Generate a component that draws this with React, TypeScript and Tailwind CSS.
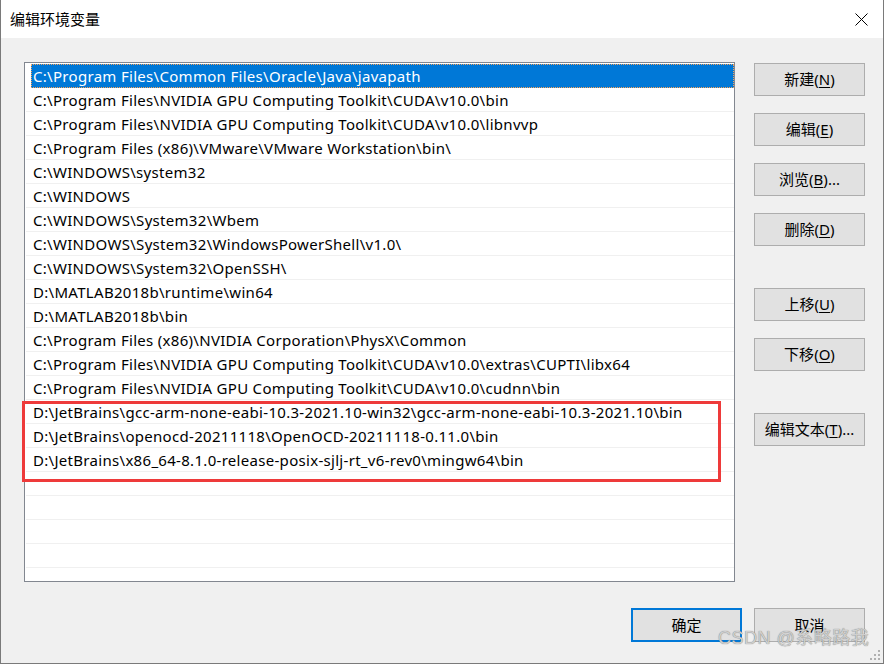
import React from 'react';

const PATHS = [
  'C:\\Program Files\\Common Files\\Oracle\\Java\\javapath',
  'C:\\Program Files\\NVIDIA GPU Computing Toolkit\\CUDA\\v10.0\\bin',
  'C:\\Program Files\\NVIDIA GPU Computing Toolkit\\CUDA\\v10.0\\libnvvp',
  'C:\\Program Files (x86)\\VMware\\VMware Workstation\\bin\\',
  'C:\\WINDOWS\\system32',
  'C:\\WINDOWS',
  'C:\\WINDOWS\\System32\\Wbem',
  'C:\\WINDOWS\\System32\\WindowsPowerShell\\v1.0\\',
  'C:\\WINDOWS\\System32\\OpenSSH\\',
  'D:\\MATLAB2018b\\runtime\\win64',
  'D:\\MATLAB2018b\\bin',
  'C:\\Program Files (x86)\\NVIDIA Corporation\\PhysX\\Common',
  'C:\\Program Files\\NVIDIA GPU Computing Toolkit\\CUDA\\v10.0\\extras\\CUPTI\\libx64',
  'C:\\Program Files\\NVIDIA GPU Computing Toolkit\\CUDA\\v10.0\\cudnn\\bin',
  'D:\\JetBrains\\gcc-arm-none-eabi-10.3-2021.10-win32\\gcc-arm-none-eabi-10.3-2021.10\\bin',
  'D:\\JetBrains\\openocd-20211118\\OpenOCD-20211118-0.11.0\\bin',
  'D:\\JetBrains\\x86_64-8.1.0-release-posix-sjlj-rt_v6-rev0\\mingw64\\bin',
];

const FONT = "font-['Noto_Sans','Noto_Sans_CJK_SC',sans-serif]";

function Btn({ label, k, tail = '' }: { label: string; k?: string; tail?: string }) {
  return (
    <button className="w-[111px] h-[33px] bg-[#e1e1e1] border border-[#adadad] text-[15px] text-black flex items-center justify-center leading-none">
      {label}
      {k && (
        <>
          (<span className="underline underline-offset-2">{k}</span>){tail}
        </>
      )}
    </button>
  );
}

export default function App() {
  const empty = 5;
  return (
    <div className={`w-[884px] h-[664px] flex flex-col bg-[#f0f0f0] border-l border-r border-b border-[#7a7a7a] relative overflow-hidden ${FONT}`}>
      {/* title bar */}
      <div className="h-[38px] bg-white flex items-center justify-between pl-[9px] pr-[15px] shrink-0">
        <span className="text-[15px] text-black">编辑环境变量</span>
        <svg width="13" height="13" viewBox="0 0 13 13" className="mt-[1px]">
          <path d="M0.5 0.5 L12.5 12.5 M12.5 0.5 L0.5 12.5" stroke="#000" strokeWidth="1" />
        </svg>
      </div>

      <div className="flex-1 flex flex-col">
        <div className="flex pt-[24px] pl-[23px] gap-[19px]">
          {/* list */}
          <div className="w-[711px] h-[520px] border border-[#828790] bg-white overflow-hidden pt-[1px] pl-[1px] tracking-[0.3px]">
            {PATHS.map((p, i) => (
              <div
                key={i}
                className={
                  i === 0
                    ? 'h-[24px] ml-[5px] bg-[#0078d7] text-white outline-1 outline-dotted outline-[#f7a35a] -outline-offset-1 flex items-center pl-[2px] pt-[1px] text-[15px] whitespace-nowrap'
                    : 'h-[24px] border-b border-[#f0f0f0] flex items-center pl-[7px] pt-[1px] text-[15px] text-black whitespace-nowrap'
                }
              >
                {p}
              </div>
            ))}
            {Array.from({ length: empty }).map((_, i) => (
              <div key={'e' + i} className="h-[24px] border-b border-[#f0f0f0]" />
            ))}
          </div>

          {/* side buttons */}
          <div className="flex flex-col pt-[1px]">
            <div className="flex flex-col gap-[17px]">
              <Btn label="新建" k="N" />
              <Btn label="编辑" k="E" />
              <Btn label="浏览" k="B" tail="..." />
              <Btn label="删除" k="D" />
            </div>
            <div className="flex flex-col gap-[17px] mt-[42px]">
              <Btn label="上移" k="U" />
              <Btn label="下移" k="O" />
            </div>
            <div className="mt-[42px]">
              <Btn label="编辑文本" k="T" tail="..." />
            </div>
          </div>
        </div>

        {/* bottom buttons */}
        <div className="flex justify-end gap-[12px] pr-[18px] mt-[26px]">
          <button className="w-[111px] h-[34px] bg-[#e1e1e1] border-2 border-[#0078d7] text-[15px] text-black flex items-center justify-center">确定</button>
          <button className="w-[111px] h-[34px] bg-[#e1e1e1] border border-[#adadad] text-[15px] text-black flex items-center justify-center">取消</button>
        </div>
      </div>

      {/* red annotation */}
      <div className="absolute left-[21px] top-[401px] w-[699px] h-[81px] border-[3px] border-[#ee3a3a] pointer-events-none" />

      {/* watermark */}
      <div className="absolute left-[717px] top-[629px] text-[18px] leading-none text-[#cfcfcf] [text-shadow:0_0_1px_#666] font-['Liberation_Sans','Noto_Sans_CJK_SC',sans-serif] tracking-[0.5px]">
        CSDN @系略路我
      </div>

      {/* resize grip */}
      <svg width="10" height="10" viewBox="0 0 10 10" className="absolute right-[3px] bottom-[3px]">
        <rect x="8" y="0" width="2" height="2" fill="#b0b0b0" />
        <rect x="4" y="4" width="2" height="2" fill="#b0b0b0" />
        <rect x="8" y="4" width="2" height="2" fill="#b0b0b0" />
        <rect x="0" y="8" width="2" height="2" fill="#b0b0b0" />
        <rect x="4" y="8" width="2" height="2" fill="#b0b0b0" />
        <rect x="8" y="8" width="2" height="2" fill="#b0b0b0" />
      </svg>
    </div>
  );
}
